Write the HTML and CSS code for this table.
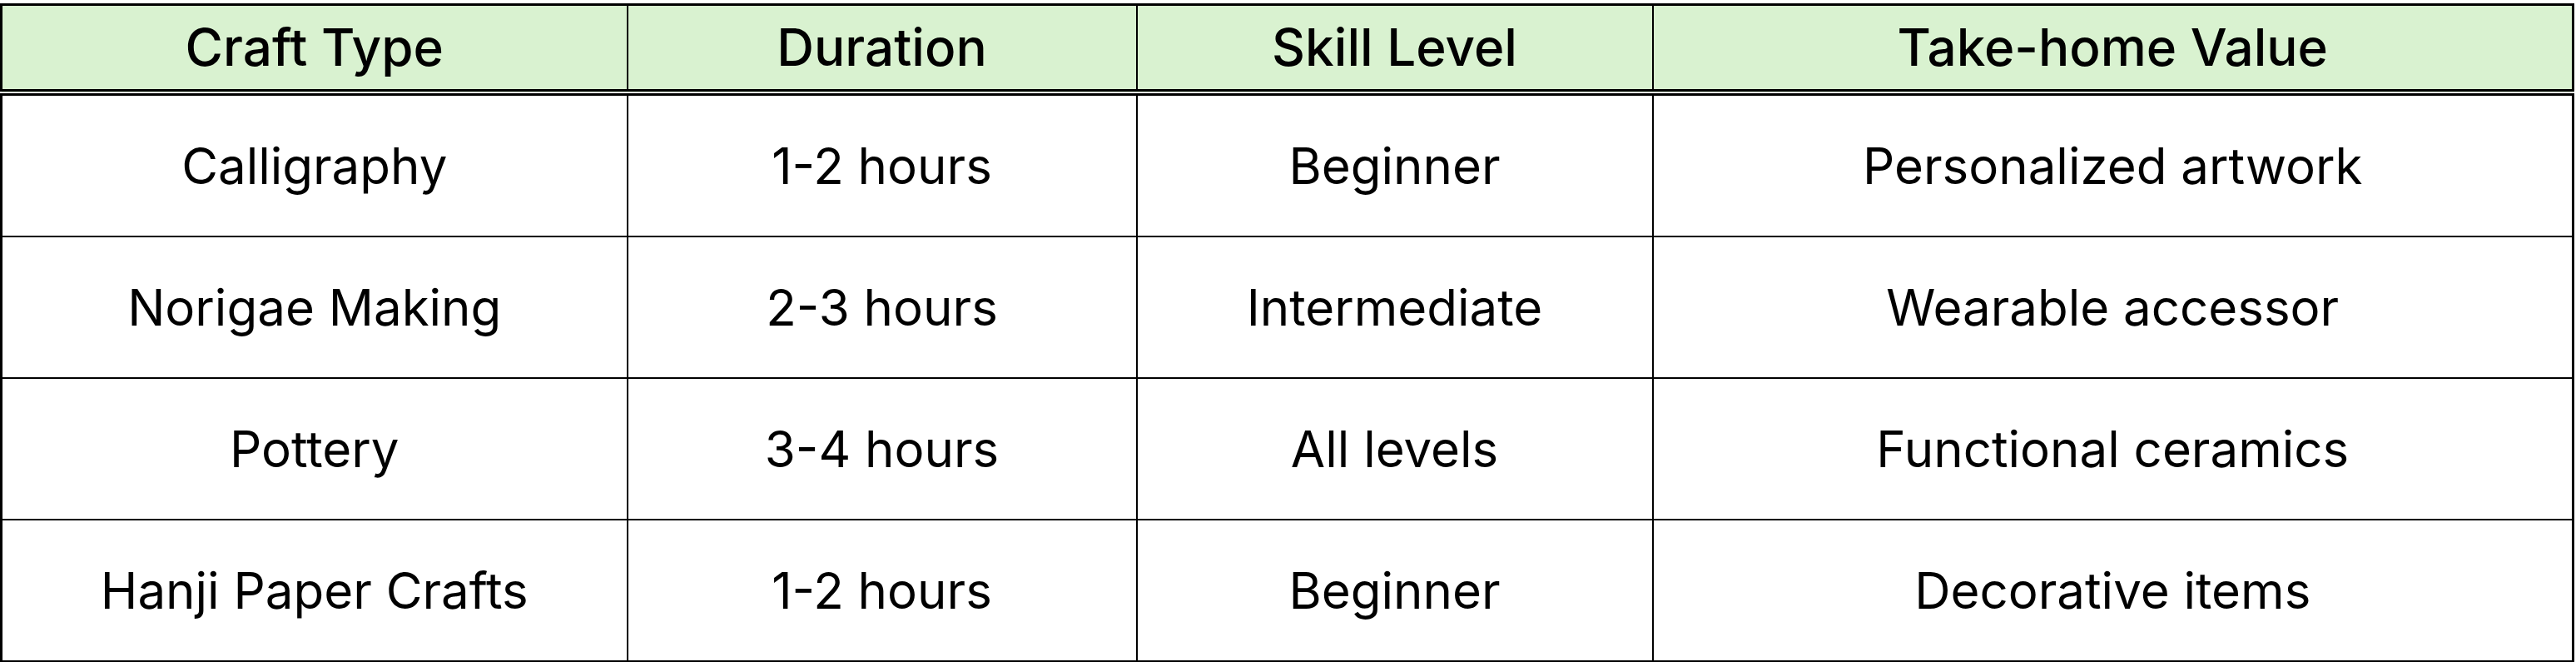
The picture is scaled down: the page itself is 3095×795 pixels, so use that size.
FILE: index.html
```html
<!DOCTYPE html>
<html lang="en">
<head>
<meta charset="utf-8">
<title>Korean Craft Workshops</title>
<link rel="stylesheet" href="styles.css">
</head>
<body>
<table class="crafts">
  <colgroup>
    <col class="c1"><col class="c2"><col class="c3"><col class="c4">
  </colgroup>
  <thead>
    <tr><th>Craft Type</th><th>Duration</th><th>Skill Level</th><th>Take-home Value</th></tr>
  </thead>
  <tbody>
    <tr><td>Calligraphy</td><td>1-2 hours</td><td>Beginner</td><td>Personalized artwork</td></tr>
    <tr><td>Norigae Making</td><td>2-3 hours</td><td>Intermediate</td><td>Wearable accessor</td></tr>
    <tr><td>Pottery</td><td>3-4 hours</td><td>All levels</td><td>Functional ceramics</td></tr>
    <tr><td>Hanji Paper Crafts</td><td>1-2 hours</td><td>Beginner</td><td>Decorative items</td></tr>
  </tbody>
</table>
</body>
</html>
```
FILE: styles.css
```css
html, body {
  margin: 0;
  background: #ffffff;
}
body {
  padding-top: 4px;
  font-family: Inter, "Noto Sans", sans-serif;
  color: #000;
}
.crafts {
  width: 3090px;
  table-layout: fixed;
  border-collapse: collapse;
  border: 3px solid #000;
}
.c1 { width: 752px; }
.c2 { width: 612px; }
.c3 { width: 620px; }
.c4 { width: 1106px; }
.crafts th,
.crafts td {
  border: 2px solid #000;
  text-align: center;
  vertical-align: middle;
  padding: 0;
  font-size: 60px;
  line-height: 1.2;
}
.crafts th {
  background: #d9f2d0;
  font-size: 62px;
  font-weight: 500;
  height: 100px;
  border-bottom: 8px double #000;
}
.crafts td {
  font-weight: 400;
  height: 168px;
}
```
